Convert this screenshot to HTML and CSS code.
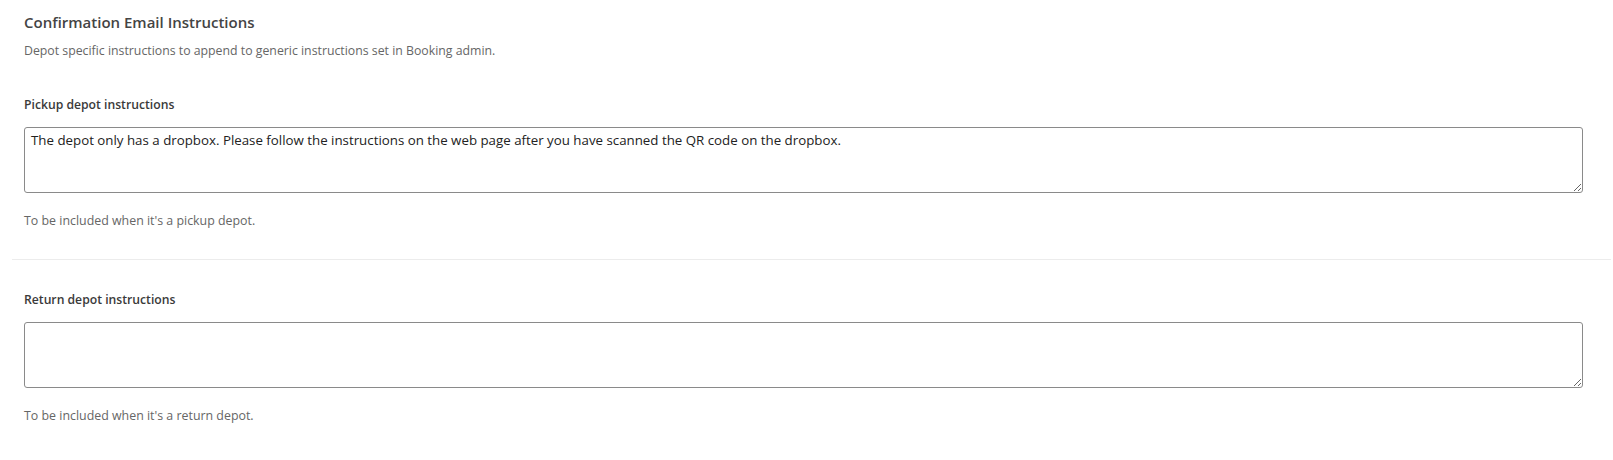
FILE: index.html
```html
<!DOCTYPE html>
<html lang="en">
<head>
<meta charset="utf-8">
<title>Confirmation Email Instructions</title>
<link rel="stylesheet" href="styles.css">
</head>
<body>
<div class="page">
  <div class="section-head">
    <h2 class="title">Confirmation Email Instructions</h2>
    <p class="subtitle">Depot specific instructions to append to generic instructions set in Booking admin.</p>
  </div>
  <div class="field">
    <label class="label" for="pickup">Pickup depot instructions</label>
    <textarea id="pickup" class="input">The depot only has a dropbox. Please follow the instructions on the web page after you have scanned the QR code on the dropbox.</textarea>
    <p class="help">To be included when it's a pickup depot.</p>
  </div>
  <div class="field field-last">
    <label class="label" for="return">Return depot instructions</label>
    <textarea id="return" class="input"></textarea>
    <p class="help">To be included when it's a return depot.</p>
  </div>
</div>
</body>
</html>
```
FILE: styles.css
```css
html, body {
  margin: 0;
  padding: 0;
  background: #ffffff;
}
body {
  font-family: "Open Sans", "Noto Sans", "Liberation Sans", sans-serif;
  color: #333;
}
.page {
  padding: 0 2px 0 12px;
}
.section-head {
  padding: 12px 28px 0 12px;
}
.title {
  margin: 0;
  font-size: 15px;
  line-height: 20px;
  font-weight: 600;
  color: #444;
}
.subtitle {
  margin: 10px 0 0 0;
  font-size: 12.3px;
  line-height: 18px;
  color: #666;
}
.field {
  display: flex;
  flex-direction: column;
  padding: 36px 28px 29px 12px;
  border-bottom: 1px solid #ececec;
}
.field + .field {
  padding-top: 31px;
}
.field-last {
  border-bottom: none;
}
.label {
  font-size: 12.2px;
  line-height: 18px;
  font-weight: 600;
  color: #3a3a3a;
}
.input {
  margin-top: 13px;
  box-sizing: border-box;
  width: 100%;
  height: 66px;
  padding: 3px 6px;
  border: 1px solid #8a8a8a;
  border-radius: 3px;
  font-family: inherit;
  font-size: 13.3px;
  line-height: 18px;
  color: #222;
  resize: vertical;
}
.help {
  margin: 19px 0 0 0;
  font-size: 12.4px;
  line-height: 18px;
  color: #666;
}
```
